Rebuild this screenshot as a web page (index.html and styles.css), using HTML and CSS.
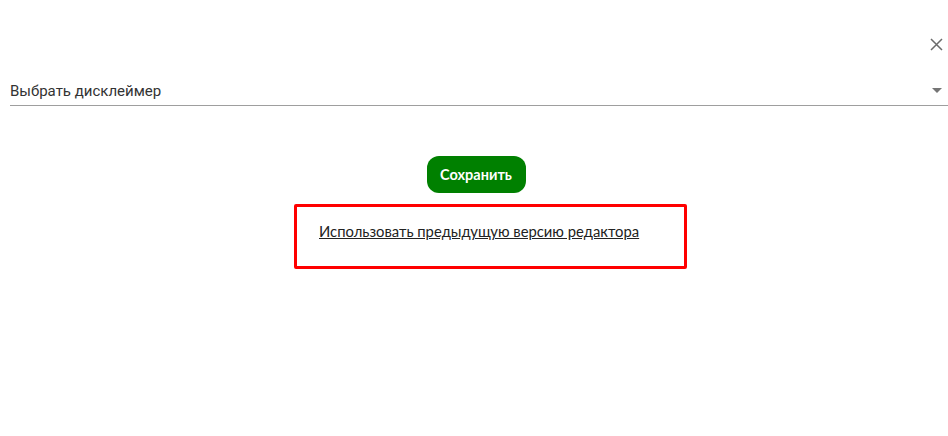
FILE: index.html
```html
<!DOCTYPE html>
<html lang="ru">
<head>
<meta charset="utf-8">
<link rel="stylesheet" href="styles.css">
</head>
<body>
<div class="dialog">
  <div class="top">
    <button class="close" aria-label="Закрыть">
      <svg width="13" height="13" viewBox="0 0 13 13"><path d="M1 1L12 12M12 1L1 12" stroke="#6b6b6b" stroke-width="1.5" fill="none"/></svg>
    </button>
  </div>
  <div class="select">
    <span class="select-label">Выбрать дисклеймер</span>
    <svg class="arrow" width="10" height="5" viewBox="0 0 10 5"><path d="M0 0H10L5 5Z" fill="#757575"/></svg>
  </div>
  <div class="actions">
    <button class="save">Сохранить</button>
    <div class="legacy">
      <a href="#" class="legacy-link">Использовать предыдущую версию редактора</a>
    </div>
  </div>
</div>
</body>
</html>
```
FILE: styles.css
```css
html, body {
  margin: 0;
  padding: 0;
  background: #fff;
}
.dialog {
  padding: 0 0 0 10px;
  font-family: Roboto, "Liberation Sans", sans-serif;
}
.top {
  display: flex;
  justify-content: flex-end;
  padding-top: 38px;
  height: 15px;
}
.close {
  border: 0;
  background: none;
  padding: 0;
  margin-right: 5px;
  width: 13px;
  height: 13px;
  display: flex;
  cursor: pointer;
}
.select {
  margin-top: 27px;
  display: flex;
  align-items: center;
  justify-content: space-between;
  border-bottom: 1px solid #9e9e9e;
  height: 25px;
}
.select-label {
  font-size: 15px;
  color: #333;
  line-height: 20px;
  margin-top: -4px;
}
.arrow {
  margin-right: 6px;
  margin-top: -4px;
}
.actions {
  display: flex;
  flex-direction: column;
  align-items: center;
  margin-top: 50px;
}
.save {
  font-family: Lato, "Liberation Sans", sans-serif;
  font-weight: 700;
  font-size: 14.5px;
  color: #fff;
  background: #008000;
  border: 0;
  border-radius: 12px;
  width: 99px;
  height: 37px;
  margin-left: -6px;
}
.legacy {
  margin-top: 11px;
  margin-left: 23px;
  width: 387px;
  height: 59px;
  border: 3px solid #ff0000;
  border-radius: 2px;
  box-sizing: content-box;
  display: flex;
}
.legacy-link {
  font-family: Lato, "Liberation Sans", sans-serif;
  font-size: 14.8px;
  color: #222;
  margin: 15px 0 0 22px;
  line-height: 18px;
  text-decoration: underline;
}
```
